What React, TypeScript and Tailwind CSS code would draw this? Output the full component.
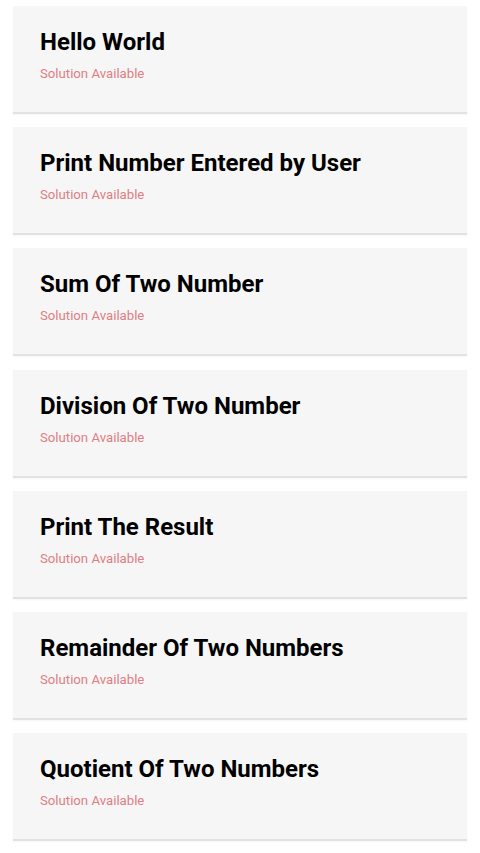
import React from "react";

const items = [
  "Hello World",
  "Print Number Entered by User",
  "Sum Of Two Number",
  "Division Of Two Number",
  "Print The Result",
  "Remainder Of Two Numbers",
  "Quotient Of Two Numbers",
];

export default function App() {
  return (
    <div className="min-h-[853px] bg-white pt-[6px] px-[13px] flex flex-col gap-[13.2px]" style={{ fontFamily: "Roboto, sans-serif" }}>
      {items.map((t) => (
        <div key={t} className="h-[108px] bg-[#f6f6f6] border-b-2 border-[#e2e2e2] pl-[27px] pt-[21px] shadow-[0_1px_2px_rgba(0,0,0,0.04)]">
          <div className="text-[24px] leading-[30px] font-bold text-black">{t}</div>
          <div className="mt-[9px] text-[13.2px] leading-[16px] text-[#e07e84]">Solution Available</div>
        </div>
      ))}
    </div>
  );
}
